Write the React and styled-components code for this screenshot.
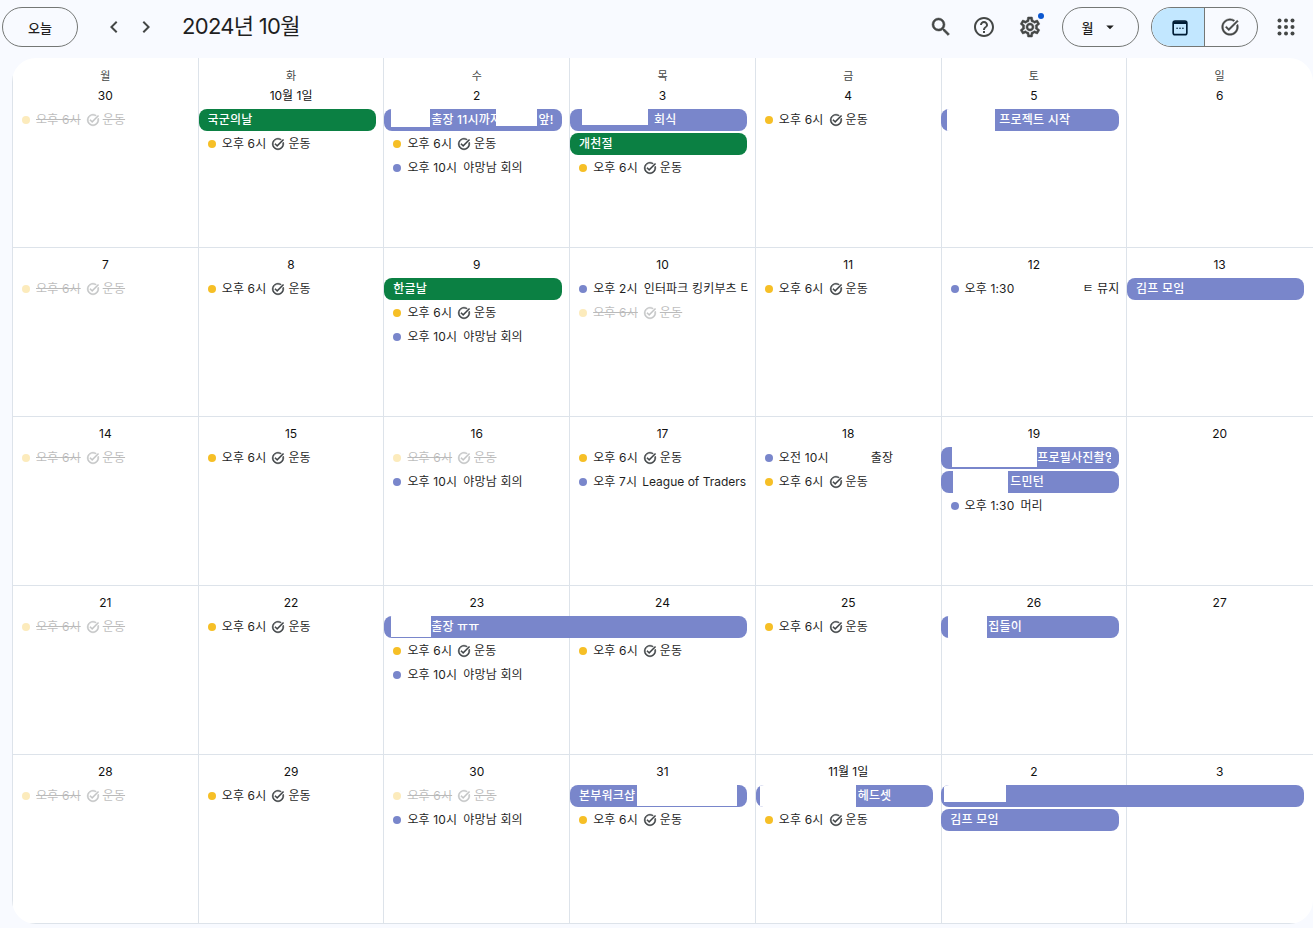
import React from "react";
import styled, { createGlobalStyle } from "styled-components";
import {
  MdSearch, MdHelpOutline, MdOutlineSettings, MdTaskAlt,
  MdChevronLeft, MdChevronRight, MdArrowDropDown,
} from "react-icons/md";

const FONT = `Inter, "Noto Sans CJK KR", "Noto Sans", sans-serif`;

const Global = createGlobalStyle`
  html, body { margin: 0; padding: 0; height: 928px; overflow: hidden; background: #f8faff; }
  body { font-family: ${FONT}; color: #1f1f1f; }
  * { box-sizing: border-box; }
`;

const Page = styled.div`width: 1313px; height: 928px; display: flex; flex-direction: column; background: #f8faff;`;
const Toolbar = styled.header`height: 58px; flex: none; display: flex; align-items: center; padding: 0 7px 4px 2px;`;
const PillButton = styled.button`
  height: 40px; width: ${p => p.$w}px; flex: none; border: 1px solid #747775; border-radius: 20px; background: transparent;
  display: flex; align-items: center; justify-content: center; gap: ${p => p.$gap || 0}px; font: 500 13px ${FONT}; color: #1f1f1f;
  padding: 0; margin-left: ${p => p.$ml || 0}px;
`;
const NavGroup = styled.div`display: flex; gap: 8px; margin: 0 24px 0 24px; color: #444746;`;
const IconButton = styled.div`
  width: ${p => p.$w || 24}px; height: ${p => p.$w || 24}px; flex: none; position: relative;
  display: flex; align-items: center; justify-content: center; color: #444746; font-size: 24px;
  margin-left: ${p => p.$ml || 0}px;
  svg path:not([fill="none"]) { stroke: currentColor; stroke-width: ${p => p.$bold || 0}px; }
`;
const Title = styled.h1`margin: -2px 0 0; font: 400 22px/28px ${FONT}; color: #1f1f1f; letter-spacing: -0.7px;`;
const Spacer = styled.div`flex: 1;`;
const NotifyDot = styled.span`position: absolute; top: 6px; right: 6px; width: 6px; height: 6px; border-radius: 50%; background: #0b57d0;`;
const Segmented = styled.div`
  display: flex; height: 40px; width: 107px; flex: none; margin-left: 12px; border: 1px solid #747775; border-radius: 20px; overflow: hidden;
`;
const Segment = styled.div`
  flex: 1; display: flex; align-items: center; justify-content: center; font-size: 20px;
  background: ${p => (p.$active ? "#c2e7ff" : "transparent")};
  color: ${p => (p.$active ? "#001d35" : "#444746")};
  padding: ${p => (p.$active ? "0 0 0 3px" : "0 3px 0 0")};
  & + & { border-left: 1px solid #747775; }
  svg path:not([fill="none"]) { stroke: currentColor; stroke-width: ${p => (p.$active ? 0 : 0.5)}px; }
`;

const Board = styled.main`
  margin-left: 12px; width: 1301px; background: #fff; border-radius: 24px; overflow: hidden; flex: none;
`;
const Week = styled.section`
  display: grid; position: relative;
  height: ${p => (p.$first ? 190 : 169)}px;
  padding-right: 1px;
  grid-template-columns: repeat(7, 1fr);
  grid-template-rows: ${p => (p.$first ? 51 : 30)}px repeat(5, 24px) 1fr;
  border-bottom: 1px solid #dde3ea;
`;
const Cell = styled.div`
  grid-row: 1 / -1; grid-column: ${p => p.$col + 1};
  border-left: 1px solid #dde3ea; display: flex; flex-direction: column; align-items: center;
  padding-top: ${p => (p.$first ? 7.5 : 6.5)}px;
`;
const Weekday = styled.div`font: 400 11px/20px ${FONT}; color: #444746;`;
const DateNum = styled.div`font: 400 12px/20px ${FONT}; color: #111;`;

const Bar = styled.div`
  grid-row: ${p => p.$row + 1}; grid-column: ${p => p.$col + 1} / span ${p => p.$span || 1};
  height: 22px; margin: 0 7.5px 0 0.8px; border-radius: 8px; position: relative; overflow: hidden;
  background: ${p => (p.$green ? "#0b8043" : "#7986cb")};
  color: #fff; font: 500 12px/22px ${FONT}; letter-spacing: 0.2px; white-space: nowrap;
  padding: 0 8px 0 ${p => p.$indent ?? 9}px;
`;
const BarText = styled.div`overflow: hidden; height: 22px;`;
const TailText = styled.span`position: absolute; top: 0; right: 8px;`;
const Redact = styled.span`
  position: absolute; top: 0; left: ${p => p.$left}px; width: ${p => p.$width}px; height: ${p => p.$h || 22}px; background: #fff;
`;
const Chip = styled.div`
  grid-row: ${p => p.$row + 1}; grid-column: ${p => p.$col + 1};
  height: 22px; margin-right: 7px; padding-left: 10px; display: flex; align-items: center; gap: 6px; overflow: hidden;
  white-space: nowrap; font: 400 12px/22px ${FONT}; letter-spacing: 0.2px; color: #1f1f1f;
  opacity: ${p => (p.$done ? 0.3 : 1)};
`;
const Dot = styled.span`width: 8px; height: 8px; border-radius: 50%; flex: none; background: ${p => (p.$task ? "#f6bf26" : "#7986cb")};`;
const Label = styled.span`
  text-decoration: ${p => (p.$done ? "line-through" : "none")};
  margin-left: ${p => p.$gap || 0}px;
  letter-spacing: ${p => (p.$latin ? 0 : 0.15)}px;
`;
const TaskIcon = styled.span`
  display: flex; font-size: 14px; flex: none; color: #3c4043; margin: 0 -3px 0 -1px;
  svg path:not([fill="none"]) { stroke: currentColor; stroke-width: 0.7px; }
`;

const CalendarGlyph = () => (
  <svg width="20" height="20" viewBox="0 0 24 24" fill="none">
    <rect x="3.8" y="4.8" width="16.4" height="16.4" rx="2.4" stroke="#001d35" strokeWidth="2" />
    <path d="M4 5h16v3.5H4z" fill="#001d35" />
    <path d="M8 2.5v4M16 2.5v4" stroke="#001d35" strokeWidth="2" strokeLinecap="round" />
    <circle cx="8.5" cy="13.5" r="1" fill="#001d35" />
    <circle cx="12" cy="13.5" r="1" fill="#001d35" />
    <circle cx="15.5" cy="13.5" r="1" fill="#001d35" />
  </svg>
);

const AppsGlyph = () => (
  <svg width="24" height="24" viewBox="0 0 24 24" fill="#444746">
    {[5.5, 12, 18.5].flatMap(y => [5.5, 12, 18.5].map(x => <circle key={`${x}-${y}`} cx={x} cy={y} r="2" />))}
  </svg>
);

const task = (col, row, done) => ({ t: "task", col, row, done });
const timed = (col, row, time, label, gap, latin) => ({ t: "timed", col, row, time, label, gap, latin });
const bar = (col, row, text, opts = {}) => ({ t: "bar", col, row, text, ...opts });
const mtg = (col, row) => timed(col, row, "오후 10시", "야망남 회의");

const weeks = [
  { days: ["30", "10월 1일", "2", "3", "4", "5", "6"], items: [
    task(0, 1, true),
    bar(1, 1, "국군의날", { green: true }), task(1, 2),
    bar(2, 1, "출장 11시까지", { indent: 47, tail: "앞!", redact: [[7, 39, 18], [112, 41, 17]] }), task(2, 2), mtg(2, 3),
    bar(3, 1, "회식", { indent: 84, redact: [[12, 66, 16]] }), bar(3, 2, "개천절", { green: true }), task(3, 3),
    task(4, 1),
    bar(5, 1, "프로젝트 시작", { indent: 58, redact: [[6, 48, 22]] }),
  ]},
  { days: ["7", "8", "9", "10", "11", "12", "13"], items: [
    task(0, 1, true), task(1, 1),
    bar(2, 1, "한글날", { green: true }), task(2, 2), mtg(2, 3),
    timed(3, 1, "오후 2시", "인터파크 킹키부츠 티켓"), task(3, 2, true),
    task(4, 1),
    timed(5, 1, "오후 1:30", "ㅌ 뮤지", 62),
    bar(6, 1, "김프 모임"),
  ]},
  { days: ["14", "15", "16", "17", "18", "19", "20"], items: [
    task(0, 1, true), task(1, 1),
    task(2, 1, true), mtg(2, 2),
    task(3, 1), timed(3, 2, "오후 7시", "League of Traders", -1, true),
    timed(4, 1, "오전 10시", "출장", 36), task(4, 2),
    bar(5, 1, "프로필사진촬영", { indent: 96, redact: [[11, 85, 20]] }),
    bar(5, 2, "드민턴", { indent: 69, redact: [[12, 55, 22]] }),
    timed(5, 3, "오후 1:30", "머리"),
  ]},
  { days: ["21", "22", "23", "24", "25", "26", "27"], items: [
    task(0, 1, true), task(1, 1),
    bar(2, 1, "출장 ㅠㅠ", { span: 2, indent: 47, redact: [[7, 40, 21]] }),
    task(2, 2), mtg(2, 3), task(3, 2), task(4, 1),
    bar(5, 1, "집들이", { indent: 47, redact: [[7, 39, 22]] }),
  ]},
  { days: ["28", "29", "30", "31", "11월 1일", "2", "3"], items: [
    task(0, 1, true), task(1, 1),
    task(2, 1, true), mtg(2, 2),
    bar(3, 1, "본부워크샵", { redact: [[67, 100, 21]] }), task(3, 2),
    bar(4, 1, "헤드셋", { indent: 102, redact: [[4, 96, 22]] }), task(4, 2),
    bar(5, 1, "", { span: 2, redact: [[3, 62, 17]] }),
    bar(5, 2, "김프 모임"),
  ]},
];

const weekdays = ["월", "화", "수", "목", "금", "토", "일"];

function Item({ it }) {
  if (it.t === "bar") {
    return (
      <Bar $row={it.row} $col={it.col} $span={it.span} $green={it.green} $indent={it.indent}>
        <BarText>{it.text}</BarText>
        {it.redact && it.redact.map(([l, w, h]) => <Redact key={l} $left={l} $width={w} $h={h} />)}
        {it.tail && <TailText>{it.tail}</TailText>}
      </Bar>
    );
  }
  if (it.t === "timed") {
    return (
      <Chip $row={it.row} $col={it.col}>
        <Dot />
        <Label>{it.time}</Label>
        <Label $gap={it.gap} $latin={it.latin}>{it.label}</Label>
      </Chip>
    );
  }
  return (
    <Chip $row={it.row} $col={it.col} $done={it.done}>
      <Dot $task />
      <Label $done={it.done}>오후 6시</Label>
      <TaskIcon><MdTaskAlt /></TaskIcon>
      <Label $done={it.done}>운동</Label>
    </Chip>
  );
}

export default function App() {
  return (
    <Page>
      <Global />
      <Toolbar>
        <PillButton $w={76}>오늘</PillButton>
        <NavGroup>
          <IconButton><MdChevronLeft /></IconButton>
          <IconButton><MdChevronRight /></IconButton>
        </NavGroup>
        <Title>2024년 10월</Title>
        <Spacer />
        <IconButton $w={40} $bold={0.5}><MdSearch /></IconButton>
        <IconButton $w={40} $ml={3}><MdHelpOutline /></IconButton>
        <IconButton $w={40} $ml={6} $bold={0.5}><MdOutlineSettings /><NotifyDot /></IconButton>
        <PillButton $w={77} $ml={12} $gap={8}>월<MdArrowDropDown size={18} /></PillButton>
        <Segmented>
          <Segment $active><CalendarGlyph /></Segment>
          <Segment><MdTaskAlt /></Segment>
        </Segmented>
        <IconButton $w={40} $ml={8}><AppsGlyph /></IconButton>
      </Toolbar>
      <Board>
        {weeks.map((w, i) => (
          <Week key={i} $first={i === 0}>
            {w.days.map((d, c) => (
              <Cell key={c} $col={c} $first={i === 0}>
                {i === 0 && <Weekday>{weekdays[c]}</Weekday>}
                <DateNum>{d}</DateNum>
              </Cell>
            ))}
            {w.items.map((it, k) => <Item key={k} it={it} />)}
          </Week>
        ))}
      </Board>
    </Page>
  );
}
